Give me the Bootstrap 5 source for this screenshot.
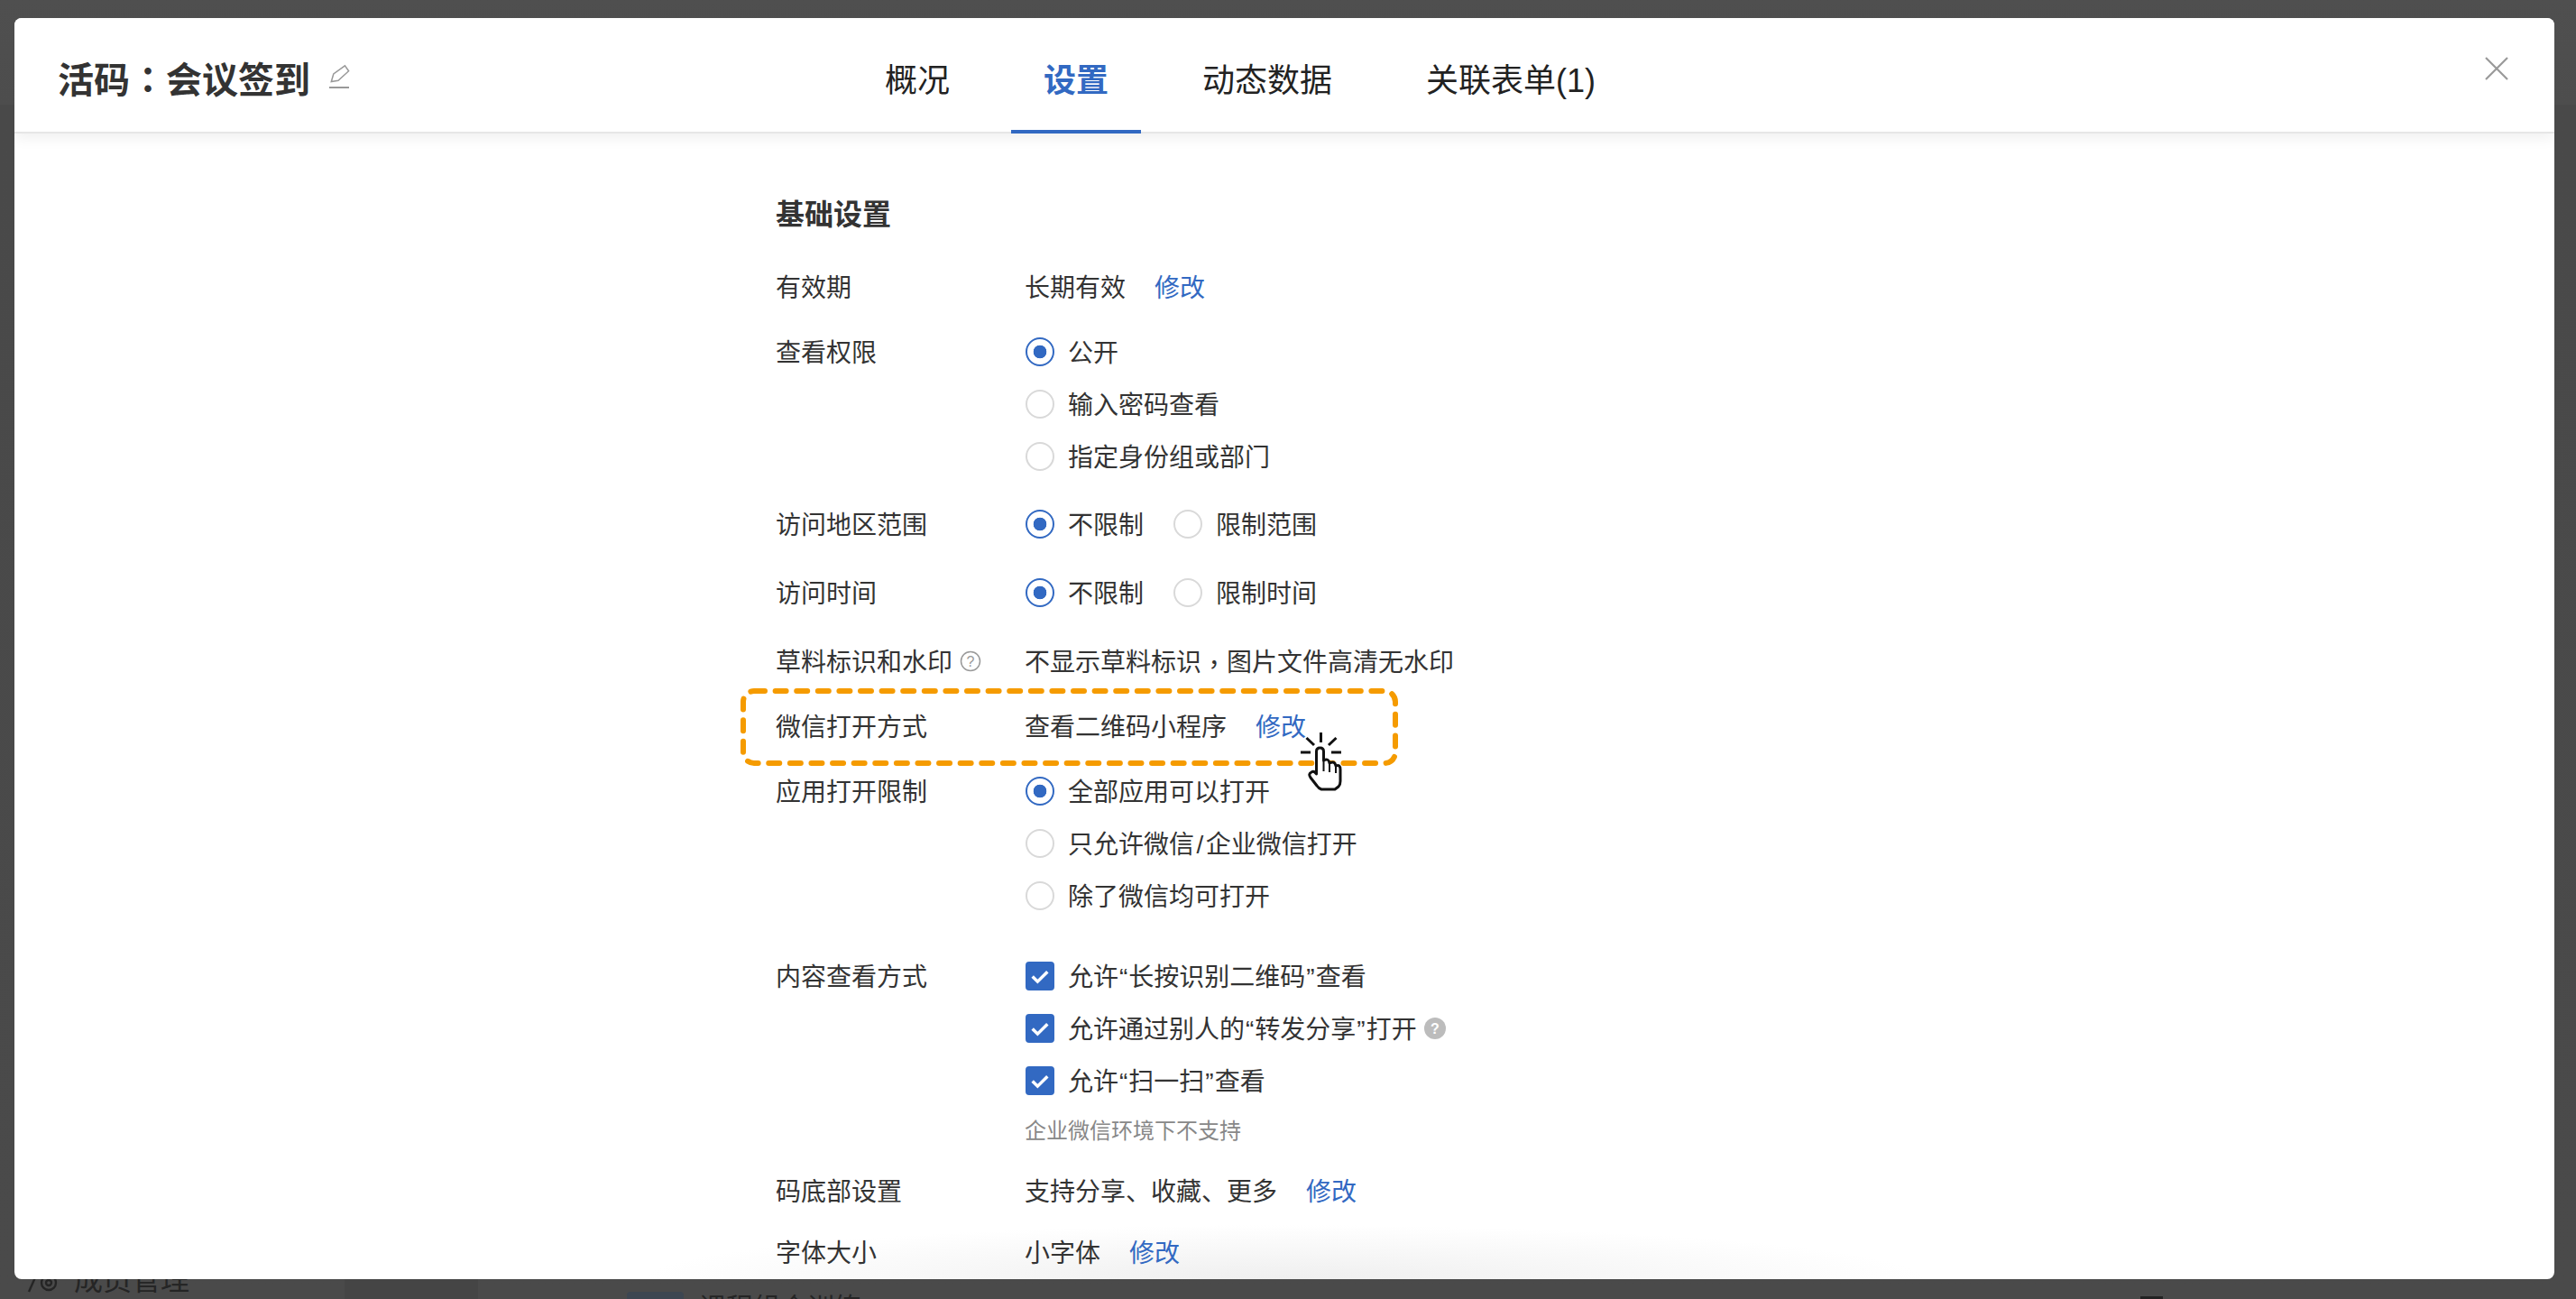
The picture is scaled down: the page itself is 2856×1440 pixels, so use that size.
<!DOCTYPE html>
<html lang="zh-CN">
<head>
<meta charset="utf-8">
<title>活码：会议签到</title>
<link rel="stylesheet" href="https://cdn.jsdelivr.net/npm/bootstrap@5.3.0/dist/css/bootstrap.min.css">
<style>
html,body{height:100%;overflow:hidden}
body{background:linear-gradient(#4f4f4f 0,#4d4d4d 116px,#494949 116px,#4a4a4a 100%);font-family:"Liberation Sans","Noto Sans CJK SC",sans-serif;color:#333;font-size:28px;line-height:32px}
.stage{height:1440px;padding-top:20px}
.sheet{margin:0 24px 0 16px;height:1398px;background:#fff;border-radius:8px;overflow:hidden;position:relative}
.sheet-head{height:128px;border-bottom:2px solid #e6e6e6;padding:0 51px 0 48px;position:relative;z-index:2;background:#fff;box-shadow:0 4px 16px rgba(0,0,0,.07)}
.head-left{width:881px;height:100px;padding-top:41px}
.sheet-title{font-size:40px;font-weight:700;line-height:50px;color:#333}
.tw-punct{font-family:"Noto Sans CJK TC",sans-serif}
.pen{margin-left:20px;margin-bottom:6px;display:block}
.tabs{gap:32px}
.tabs .nav-link{font-size:36px;line-height:50px;color:#222;padding:45px 36px 29px;border-bottom:4px solid transparent}
.tabs .nav-link.active{color:#3269c2;font-weight:700;border-bottom-color:#3269c2}
.x-btn{margin-top:43px;line-height:0}
.sheet-body{padding:73px 0 0 844px;position:relative;z-index:1;height:1270px;overflow:hidden}
.sec-title{font-size:32px;font-weight:700;line-height:35px;height:32px;color:#333}
.frow{display:flex;position:relative}
.flabel{width:276px;flex:none;display:flex;align-items:center;height:32px;padding-top:3px}
.fval{display:flex;flex-direction:column;gap:26px}
.fline{display:flex;align-items:center;height:32px;white-space:nowrap;padding-top:3px}
.flink{color:#3269c2;text-decoration:none;margin-left:32px}
.opt{display:flex;align-items:center;margin:0;padding:0;min-height:0}
.opt + .opt{margin-left:32px}
.opt .form-check-input{width:32px;height:32px;margin:-3px 15px 0 1px;float:none;flex:none;border:2px solid #d9d9d9;background-color:#fff}
.opt .form-check-input[type=radio]:checked{border-color:#3269c2;background-color:#fff;background-image:radial-gradient(circle,#3269c2 0,#3269c2 7px,transparent 7.6px)}
.opt .form-check-input[type=checkbox]{border-radius:4px}
.opt .form-check-input[type=checkbox]:checked{border-color:#3269c2;background-color:#3269c2;background-size:100% 100%;background-image:url("data:image/svg+xml,%3csvg xmlns='http://www.w3.org/2000/svg' viewBox='0 0 32 32'%3e%3cpath fill='none' stroke='%23fff' stroke-width='4' d='M6.5 16.5l6.5 6.5 12.5-12.5'/%3e%3c/svg%3e")}
.opt .form-check-input:focus{box-shadow:none}
.opt .form-check-label{opacity:1;color:#333}
.qt{padding:0 1px}
.sl{padding:0 2.5px}
.note-text{font-size:24px;color:#888}
.qmark{width:24px;height:24px;flex:none;display:block;margin-top:-3px}
.qmark text{font-family:"Liberation Sans",sans-serif;font-size:16px;text-anchor:middle}
.s40{margin-top:40px}.s57{margin-top:57px}.s43{margin-top:43px}.s44{margin-top:44px}.s49{margin-top:49px}.s22{margin-top:22px}.s36{margin-top:36px}
.dash-box{position:absolute;left:-39px;top:-26px;pointer-events:none}
.hand{position:absolute;left:580px;top:21px;pointer-events:none}
.bottom-fade{position:absolute;left:0;right:0;bottom:0;height:60px;pointer-events:none;background:radial-gradient(ellipse 710px 60px at 50% 100%,#efefef 0,rgba(255,255,255,0) 100%);z-index:0}
.under-page{height:22px;overflow:hidden;color:#252525;position:relative}
.under-a{width:382px;padding-left:30px;font-size:32px;line-height:36px;margin-top:-20px;flex:none}
.under-b{width:148px;background:#454545;flex:none}
.under-thumb{width:63px;height:8px;margin:14px 17px 0 165px;background:#3d4651;border-radius:4px 4px 0 0;flex:none}
.under-c{font-size:30px;line-height:36px;margin-top:14px;flex:none}
.under-d{width:25px;height:3px;background:#222;margin:19px 0 0 1418px;flex:none}
.mem-icon{margin-right:18px}
</style>
</head>
<body>
<div class="stage d-flex flex-column">
  <section class="sheet">
    <header class="sheet-head d-flex align-items-start">
      <div class="head-left d-flex align-items-start flex-none">
        <div class="d-flex align-items-center">
          <div class="sheet-title">活码<span class="tw-punct" lang="zh-TW">：</span>会议签到</div>
          <svg class="pen" width="24" height="30" viewBox="364 68 24 30" fill="none" stroke="#999" stroke-width="1.5"><path d="M367.3 88.5L369.8 80 382.4 70.8 386.6 76.7 375 87.3Z"/><path d="M365 95H387" stroke-width="2"/></svg>
        </div>
      </div>
      <ul class="nav tabs flex-nowrap">
        <li class="nav-item"><a class="nav-link" href="#">概况</a></li>
        <li class="nav-item"><a class="nav-link active" href="#">设置</a></li>
        <li class="nav-item"><a class="nav-link" href="#">动态数据</a></li>
        <li class="nav-item"><a class="nav-link" href="#">关联表单(1)</a></li>
      </ul>
      <button type="button" class="btn border-0 p-0 ms-auto x-btn" aria-label="关闭">
        <svg width="26" height="26" viewBox="0 0 26 26" stroke="#999" stroke-width="2.2"><path d="M1 1L25 25M25 1L1 25"/></svg>
      </button>
    </header>

    <div class="sheet-body">
      <div class="sec-title">基础设置</div>

      <div class="frow s49">
        <div class="flabel">有效期</div>
        <div class="fval"><div class="fline">长期有效<a class="flink" href="#">修改</a></div></div>
      </div>

      <div class="frow s40">
        <div class="flabel">查看权限</div>
        <div class="fval">
          <div class="fline"><label class="form-check opt"><input class="form-check-input" type="radio" name="r1" checked><span class="form-check-label">公开</span></label></div>
          <div class="fline"><label class="form-check opt"><input class="form-check-input" type="radio" name="r1"><span class="form-check-label">输入密码查看</span></label></div>
          <div class="fline"><label class="form-check opt"><input class="form-check-input" type="radio" name="r1"><span class="form-check-label">指定身份组或部门</span></label></div>
        </div>
      </div>

      <div class="frow s43">
        <div class="flabel">访问地区范围</div>
        <div class="fval"><div class="fline">
          <label class="form-check opt"><input class="form-check-input" type="radio" name="r2" checked><span class="form-check-label">不限制</span></label>
          <label class="form-check opt"><input class="form-check-input" type="radio" name="r2"><span class="form-check-label">限制范围</span></label>
        </div></div>
      </div>

      <div class="frow s44">
        <div class="flabel">访问时间</div>
        <div class="fval"><div class="fline">
          <label class="form-check opt"><input class="form-check-input" type="radio" name="r3" checked><span class="form-check-label">不限制</span></label>
          <label class="form-check opt"><input class="form-check-input" type="radio" name="r3"><span class="form-check-label">限制时间</span></label>
        </div></div>
      </div>

      <div class="frow s44">
        <div class="flabel">草料标识和水印<svg class="qmark ms-2" viewBox="0 0 24 24"><circle cx="12" cy="12" r="10.5" fill="none" stroke="#999" stroke-width="1.5"/><text x="12" y="17.6" fill="#999">?</text></svg></div>
        <div class="fval"><div class="fline">不显示草料标识<span class="tw-punct" lang="zh-TW">，</span>图片文件高清无水印</div></div>
      </div>

      <div class="frow s40">
        <div class="flabel">微信打开方式</div>
        <div class="fval"><div class="fline">查看二维码小程序<a class="flink" href="#">修改</a></div></div>
        <svg class="dash-box" width="729" height="86" viewBox="0 0 729 86" fill="none"><rect x="3" y="3" width="723" height="80" rx="12" stroke="#f59b00" stroke-width="6" stroke-linecap="round" stroke-dasharray="12 11.6"/></svg>
        <svg class="hand" width="50" height="70" viewBox="1440 810 50 70" fill="none" stroke="#111" stroke-width="3" stroke-linejoin="round"><path d="M1464.5 812V823M1442 834H1453M1476 834H1487M1448.5 818L1457 826M1481.5 818L1473 826" stroke-width="3"/><path fill="#fff" d="M1459.5 858V833Q1459.5 829 1463.5 829 1467.5 829 1467.5 833V843Q1473 840 1474 846 1480 843 1481 849 1486 847 1486 853V866Q1486 870 1484 872L1480 875H1465Q1462 874 1460 871L1453 862Q1450 858 1454 856 1457 854 1459.5 858Z"/><path d="M1467.5 843V855M1474 846V856M1481 849V857" stroke-width="2"/></svg>
      </div>

      <div class="frow s40">
        <div class="flabel">应用打开限制</div>
        <div class="fval">
          <div class="fline"><label class="form-check opt"><input class="form-check-input" type="radio" name="r4" checked><span class="form-check-label">全部应用可以打开</span></label></div>
          <div class="fline"><label class="form-check opt"><input class="form-check-input" type="radio" name="r4"><span class="form-check-label">只允许微信<span class="sl">/</span>企业微信打开</span></label></div>
          <div class="fline"><label class="form-check opt"><input class="form-check-input" type="radio" name="r4"><span class="form-check-label">除了微信均可打开</span></label></div>
        </div>
      </div>

      <div class="frow s57">
        <div class="flabel">内容查看方式</div>
        <div class="fval">
          <div class="fline"><label class="form-check opt"><input class="form-check-input" type="checkbox" checked><span class="form-check-label">允许<span class="qt">“</span>长按识别二维码<span class="qt">”</span>查看</span></label></div>
          <div class="fline"><label class="form-check opt"><input class="form-check-input" type="checkbox" checked><span class="form-check-label">允许通过别人的<span class="qt">“</span>转发分享<span class="qt">”</span>打开</span></label><svg class="qmark ms-2" viewBox="0 0 24 24"><circle cx="12" cy="12" r="12" fill="#bcbcbc"/><text x="12" y="17.6" fill="#fff" font-weight="700">?</text></svg></div>
          <div class="fline"><label class="form-check opt"><input class="form-check-input" type="checkbox" checked><span class="form-check-label">允许<span class="qt">“</span>扫一扫<span class="qt">”</span>查看</span></label></div>
        </div>
      </div>

      <div class="frow s22">
        <div class="flabel"></div>
        <div class="fval"><div class="fline note-text">企业微信环境下不支持</div></div>
      </div>

      <div class="frow s36">
        <div class="flabel">码底部设置</div>
        <div class="fval"><div class="fline">支持分享、收藏、更多<a class="flink" href="#">修改</a></div></div>
      </div>

      <div class="frow s36">
        <div class="flabel">字体大小</div>
        <div class="fval"><div class="fline">小字体<a class="flink" href="#">修改</a></div></div>
      </div>
    </div>
    <div class="bottom-fade"></div>
  </section>

  <div class="under-page d-flex">
    <div class="under-a d-flex align-items-center">
      <svg class="mem-icon" width="34" height="30" viewBox="0 0 34 30" fill="none" stroke="#252525" stroke-width="2.4"><path d="M2 28L10 10"/><circle cx="24" cy="18" r="8"/><circle cx="24" cy="18" r="3"/></svg>
      <span>成员管理</span>
    </div>
    <div class="under-b"></div>
    <div class="under-thumb"></div>
    <div class="under-c">课程组合训练</div>
    <div class="under-d"></div>
  </div>
</div>
<script src="https://cdn.jsdelivr.net/npm/bootstrap@5.3.0/dist/js/bootstrap.bundle.min.js"></script>
</body>
</html>
